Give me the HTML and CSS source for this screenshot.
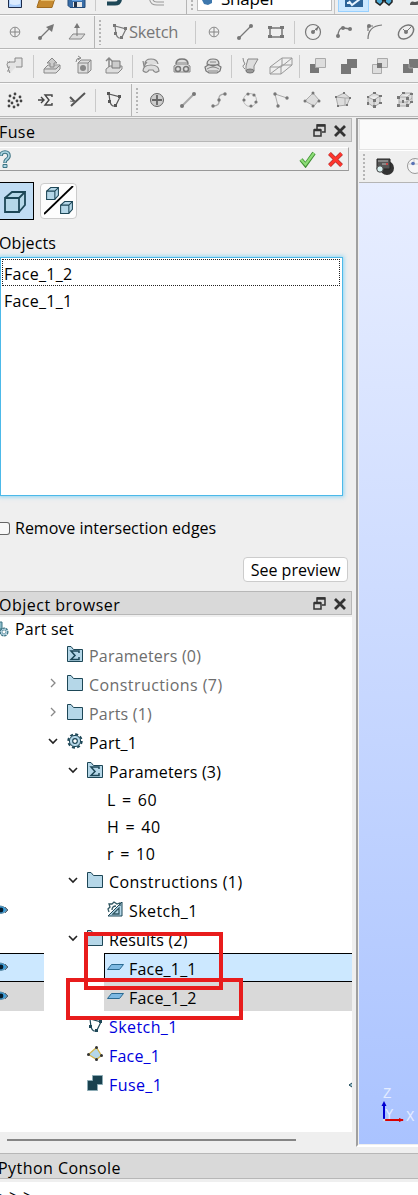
FILE: index.html
```html
<!DOCTYPE html>
<html lang="en">
<head>
<meta charset="utf-8">
<title>Shaper</title>
<link rel="stylesheet" href="styles.css">
</head>
<body>
<svg class="defs" width="0" height="0">
  <defs>
    <symbol id="folder" viewBox="0 0 16 16"><path d="M.5 15.500V.5H4l2.500 3h9v12z" fill="#b5d7e8" stroke="#1d4757"/></symbol>
    <symbol id="sigma" viewBox="0 0 16 16"><path d="M.5 15.500V.5H4l2.500 3h9v12z" fill="#b5d7e8" stroke="#1d4757"/><path d="M12 7V5H4l4 4.500L4 13.500h8V11" fill="none" stroke="#1d4757" stroke-width="1.500"/></symbol>
    <symbol id="cube" viewBox="0 0 22 22"><path d="M1 7 8 1h13v13l-6 7H1z" fill="#b5d7e8"/><path d="M1 7h14v14H1zM1 7l7-6h13l-6 6M21 1v13l-6 7" fill="none" stroke="#1d4757" stroke-width="1.800"/></symbol>
    <symbol id="face" viewBox="0 0 17 8"><path d="M4.500 1.500h12l-4 5H.5z" fill="#7db9e3" stroke="#2b6a92"/></symbol>
    <symbol id="eye" viewBox="0 0 10 12"><path d="M-6 6Q1-2 7 6 1 13-6 6" fill="#3ba0df" stroke="#5b87a0"/><circle cx="1" cy="6" r="2.400" fill="#061b2a"/><path d="M5 3l3 3-3 3" fill="none" stroke="#567"/></symbol>
    <symbol id="float" viewBox="0 0 13 13"><path d="M4 5V1h8v7H9M1 6h7v6H1z" fill="none" stroke="#333" stroke-width="1.500"/><path d="M4 1.500h8M1 6h7" stroke="#333" stroke-width="2.500"/></symbol>
    <symbol id="close" viewBox="0 0 12 12"><path d="m1 1 10 10M11 1 1 11" stroke="#333" stroke-width="2.800"/></symbol>
    <symbol id="right" viewBox="0 0 8 10"><path d="m2 1 4 4-4 4" fill="none" stroke="#888" stroke-width="1.300"/></symbol>
    <symbol id="down" viewBox="0 0 10 8"><path d="m1 2 4 4 4-4" fill="none" stroke="#222" stroke-width="1.600"/></symbol>
    <symbol id="poly" viewBox="-8 -8 16 16"><path d="M-5-6-4 2Q-2 8 2 5L6-3-5-6" fill="none" stroke="currentColor" stroke-width="1.200"/><path d="M-7-8h3v3h-3zM4-5h3v3H4zM-6 0h3v3h-3zM0 4h3v3H0z" fill="currentColor"/></symbol>
  </defs>
</svg>
<div class="window">
  <header class="toolbars">
    <div class="bar bar-top">
      <svg class="tool" viewBox="-15 1 31 14"><path d="M-6.500-8h13V8.500h-13z" fill="#a9cdfb" stroke="#1c2b4a"/><path d="M-5-8h10V5Q0 7-5 5z" fill="#dcecff"/></svg>
      <svg class="tool" viewBox="-15 1 31 14"><path d="M-9 8-6-1h15L6 8.500h-15z" fill="#c68a2f" stroke="#a06b1f"/><path d="M-5 1.500H8" stroke="#e6bd6d"/></svg>
      <svg class="tool" viewBox="-15 1 31 14"><path d="M-9-8H8V8.500H-7l-2-2z" fill="#3a6ea8" stroke="#234a78"/><path d="M-5-8h10V2H-5z" fill="#6ba7e5"/><path d="M-4 3h9v5h-9z" fill="#e8e8e8"/><path d="M-3 3h3v5h-3z" fill="#23334a"/></svg>
      <i class="sep"></i>
      <svg class="tool wide" viewBox="-15 1 43 14"><path d="M-7 4.500h8q5 0 5-5v-5" fill="none" stroke="#1d4757" stroke-width="4"/></svg>
      <svg class="tool redo" viewBox="-15 1 31 14"><path d="M7 4.500H0q-6 0-6-6" fill="none" stroke="#999" stroke-width="4"/><path d="M7 4.500H0q-6 0-6-6" fill="none" stroke="#ededed" stroke-width="2"/></svg>
      <i class="break"></i>
      <div class="combo"><svg width="10" height="6" viewBox="0 0 10 6"><path d="M0 0h10v3L6 5 2 4z" fill="#3d77ad"/></svg><span>Shaper</span></div>
      <i class="edge"></i>
      <div class="pressed"><svg class="tool" viewBox="-15 1 31 14"><path d="M-9-8H9V8H-9z" fill="#2d6498"/><path d="M-5 2-2 6 6 0M-7 4h3" fill="none" stroke="#e7f4ff" stroke-width="2"/></svg></div>
      <svg class="tool" viewBox="-15 1 31 14"><path d="M-8-2h6l1 5-3 3-4-3zM2-2h6v5L5 6 1 3z" fill="#4ba9d5" stroke="#222" stroke-width="1.500"/><path d="M-2 1h4" stroke="#222" stroke-width="3"/></svg>
      <svg class="tool" viewBox="-15 1 31 14"><path d="M-5 6q0-5 5-3l8-2v4l-7 1z" fill="#555"/></svg>
    </div>
    <div class="bar muted">
      <svg class="tool" viewBox="-15 -17 31 33"><g fill="none" stroke="#858585"><circle r="4.800"/><path d="M-4 0h8M0-4v8"/></g></svg>
      <svg class="tool" viewBox="-15 -17 31 33"><path d="M-6 6 4-4" stroke="#777" stroke-width="1.300"/><path d="M8-8 6 0 0-5z" fill="#777"/><circle cx="-6" cy="6" r="2" fill="#777"/></svg>
      <svg class="tool" viewBox="-15 -17 31 33"><path d="M-4 2H8L4 7H-8z" fill="#ddd" stroke="#888"/><path d="M0 4v-9" stroke="#777"/><path d="M0-9 3-4h-6z" fill="#777"/></svg>
      <i class="break narrow"></i>
      <div class="sketch"><svg width="16" height="16"><use href="#poly"/></svg><span>Sketch</span></div>
      <i class="sep"></i>
      <svg class="tool" viewBox="-15 -17 31 33"><g fill="none" stroke="#858585"><circle r="4.800"/><path d="M-4 0h8M0-4v8"/></g></svg>
      <svg class="tool" viewBox="-15 -17 31 33"><path d="M-6 6 6-6" stroke="#777" stroke-width="1.300"/><circle cx="-6" cy="6" r="2"/><circle cx="6" cy="-6" r="2"/></svg>
      <svg class="tool" viewBox="-15 -17 31 33"><path d="M-6-4H6v9H-6z" fill="none" stroke="#777" stroke-width="1.500"/><path d="M-8-6h4v3h-4zM4-6h4v3H4zM-8 3h4v3h-4zM4 3h4v3H4z"/></svg>
      <i class="sep"></i>
      <svg class="tool" viewBox="-15 -17 31 33"><circle r="7.500" fill="none" stroke="#777" stroke-width="1.200"/><path d="m0 0 5-5" stroke="#777"/><circle r="2"/><path d="m2-3 4-3-2 5z"/></svg>
      <svg class="tool" viewBox="-15 -17 31 33"><path d="M-6 5Q-6-5 0-4L6-3" fill="none" stroke="#777" stroke-width="1.300"/><circle cx="-6" cy="4" r="2"/><circle cx="-1" cy="-4" r="2"/><circle cx="6" cy="-3" r="2"/></svg>
      <svg class="tool" viewBox="-15 -17 31 33"><path d="M-7 7Q-7-6 7-7M-7-6h5m-5 0v5" fill="none" stroke="#777" stroke-width="1.200"/><circle cx="-6" cy="-6" r="2"/></svg>
      <svg class="tool" viewBox="-15 -17 31 33"><ellipse rx="8.500" ry="6" fill="none" stroke="#777" stroke-width="1.500" transform="rotate(-38)"/><path d="m-3-3 3 3 5-5" fill="none" stroke="#777"/><circle r="2"/></svg>
    </div>
    <div class="bar muted">
      <svg class="tool" viewBox="-15 -17 31 33"><path d="M-5 7q-3-3-1-5-4-4 0-6h6v-4h7v9H1" fill="#e3e3e3" stroke="#888"/><path d="M-8-4h3m-3 5h3m-3 4h3" stroke="#888" stroke-dasharray="1 1"/></svg>
      <i class="sep"></i>
      <svg class="tool" viewBox="-15 -17 31 33"><path d="M-8 3-4-1H8v4L4 7H-8z" fill="#ddd" stroke="#888"/><path d="M-8 3H4l4-4M-2 1v-4h-3l5-5 5 5H2v4z" fill="#ccc" stroke="#888"/></svg>
      <svg class="tool" viewBox="-15 -17 31 33"><path d="M-5-3-2-6H8V4L5 7H-5z" fill="#ddd" stroke="#888"/><path d="M-5-3H5V7M5-3l3-3M-7-4q0-4 4-4m-2-2 3 2-3 2" fill="none" stroke="#888"/><circle cy="2" r="3" fill="#888"/></svg>
      <svg class="tool" viewBox="-15 -17 31 33"><path d="M-8 3-4 0H8v3L4 7H-8z" fill="#ddd" stroke="#888"/><path d="M-2-5H6v7h-8z" fill="#ccc" stroke="#777"/><path d="M-5 1v-9m-3 3 3-3 3 3" fill="none" stroke="#888" stroke-width="1.500"/></svg>
      <i class="sep"></i>
      <svg class="tool" viewBox="-15 -17 31 33"><path d="M-8 5q0-6 8-6t8 6q-4 3-6-1h-4q-2 4-6 1M-6-2q0-5 6-5t7 5M-4-4-7 0l-1-5" fill="#ddd" stroke="#888" stroke-width="1.200"/></svg>
      <svg class="tool" viewBox="-15 -17 31 33"><path d="M-8 6V0l3-2H5l3 2v6z" fill="#ddd" stroke="#888"/><path d="M-6-2q0-5 6-5t6 5" fill="#ddd" stroke="#777" stroke-width="1.500"/><path d="M-5-3H5" stroke="#888"/><circle cx="-4" cy="3" r="2.500" fill="none" stroke="#777" stroke-width="1.500"/><circle cx="4" cy="3" r="2.500" fill="none" stroke="#777" stroke-width="1.500"/></svg>
      <svg class="tool" viewBox="-15 -17 31 33"><path d="M-7 5-8 1l3-2H5l3 2-1 4-3 2h-8zM-6-2q0-5 6-5t6 5l-6 2z" fill="#ddd" stroke="#777" stroke-width="1.200"/><path d="M-6 3q6-4 12 0M-3-4h6M-5 5H5" fill="none" stroke="#888"/></svg>
      <i class="sep"></i>
      <svg class="tool" viewBox="-15 -17 31 33"><path d="M-2-7H8L4 0v5q-4 3-8 0V0z" fill="#ddd" stroke="#888"/><ellipse cy="5" rx="4" ry="2" fill="#999" stroke="#777"/><path d="M-5 3q-4-3 0-5-2-3-2-6" fill="none" stroke="#888"/></svg>
      <svg class="tool" viewBox="-15 -17 31 33"><path d="M-11 1 1-8h10v7L0 8h-11zM-11 1H0l11-9M0 1v7M1-8v7l-12 9M1-1h10" fill="none" stroke="#999"/></svg>
      <i class="sep"></i>
      <svg class="tool" viewBox="-15 -17 31 33"><path d="M-8-2h9v9h-9z"/><path d="M-2.500-7.500h10v9h-10z" fill="#ddd" stroke="#aaa"/></svg>
      <svg class="tool" viewBox="-15 -17 31 33"><path d="M-8-2h6v-5H8V2H2v6H-8z"/></svg>
      <svg class="tool" viewBox="-15 -17 31 33"><path d="M-7.500-1.500h9v9h-9zM-2.500-7.500h10v9h-10z" fill="#ddd" stroke="#aaa"/><path d="M-3-3h5v5h-5z"/></svg>
      <svg class="tool" viewBox="-15 -17 31 33"><path d="M-8-2h6v-5H8V2H2v5H-8z"/><path d="M-2-2v4h4" fill="none" stroke="#aaa"/></svg>
    </div>
    <div class="bar">
      <svg class="tool" viewBox="-15 -17 31 33"><g fill="#444"><circle cx="0" cy="-6" r="1.400"/><circle cx="-5" cy="-4" r="1.400"/><circle cx="5" cy="-3" r="1.400"/><circle cx="-1" cy="-2" r="1.400"/><circle cx="-6" cy="1" r="1.400"/><circle cx="2" cy="1" r="1.400"/><circle cx="6" cy="1" r="1.400"/><circle cx="-3" cy="3" r="1.400"/><circle cx="3" cy="5" r="1.400"/><circle cx="-1" cy="7" r="1.400"/><circle cx="-6" cy="6" r="1.400"/></g></svg>
      <svg class="tool" viewBox="-15 -17 31 33"><path d="M-8 0h5M-5-3l3 3-3 3M6-3v-2H-1l4 5-4 5h7V3" fill="none" stroke="#444" stroke-width="1.400"/></svg>
      <svg class="tool" viewBox="-15 -17 31 33"><path d="M-6 6 8-7M-7-3l5 5" fill="none" stroke="#555" stroke-width="2"/><path d="M-2 2-7 1" fill="none" stroke="#777" stroke-width="1.200"/></svg>
      <i class="sep"></i>
      <svg class="tool dark" viewBox="-15 -17 31 33"><use href="#poly" x="-8" y="-8" width="16" height="16"/></svg>
      <i class="break"></i>
      <svg class="tool" viewBox="-15 -17 31 33"><circle r="6.500" fill="#ccc" stroke="#666"/><path d="M-5 0H5M0-5V5" stroke="#666" stroke-width="1.800"/></svg>
      <svg class="tool" viewBox="-15 -17 31 33"><path d="M-6 6 6-6" stroke="#aaa" stroke-width="2"/><circle cx="-6" cy="6" r="2"/><circle cx="6" cy="-6" r="2"/></svg>
      <svg class="tool" viewBox="-15 -17 31 33"><path d="M-6 6Q1 6 0 0T6-6" fill="none" stroke="#aaa" stroke-width="1.300"/><circle cx="-6" cy="6" r="1.700"/><circle r="1.700"/><circle cx="6" cy="-6" r="1.700"/></svg>
      <svg class="tool" viewBox="-15 -17 31 33"><circle r="6.500" fill="none" stroke="#bbb"/><circle cx="-6" r="1.600"/><circle cx="-2" cy="-6" r="1.600"/><circle cx="4" cy="-5" r="1.600"/><circle cx="6" cy="2" r="1.600"/><circle cx="1" cy="6" r="1.600"/></svg>
      <svg class="tool" viewBox="-15 -17 31 33"><path d="M6-2-6-6-3 6" fill="none" stroke="#aaa"/><circle cx="6" cy="-2" r="1.700"/><circle cx="-6" cy="-6" r="1.700"/><circle cx="-3" cy="6" r="1.700"/></svg>
      <svg class="tool" viewBox="-15 -17 31 33"><path d="M-7 1 1-7 7 0 2 6z" fill="#ddd" stroke="#aaa"/><circle cx="-7" cy="1" r="1.500"/><circle cx="1" cy="-7" r="1.500"/><circle cx="7" cy="1" r="1.500"/><circle cx="1" cy="6" r="1.500"/></svg>
      <svg class="tool" viewBox="-15 -17 31 33"><path d="M-7-3 1-7 7-2 4 5-5 6zM-7-3l9 1 5 0M2-2v8" fill="#ddd" stroke="#aaa"/><path d="M-8-4h2v2h-2zM0-8h2v2H0zM6-3h2v2H6zM3 4h2v2H3zM-6 5h2v2h-2z"/></svg>
      <svg class="tool" viewBox="-15 -17 31 33"><path d="M-6-3 0-7l6 3v7L0 7-6 3zM-6-3l6 3 6-4M0 0v7" fill="#ddd" stroke="#aaa"/><path d="M-7-4h2v2h-2zM-1-8h3v2h-3zM5-5h3v2H5zM-1-1h3v3h-3zM-7 2h2v3h-2zM5 2h3v2H5zM-1 5h3v3h-3z"/></svg>
      <svg class="tool" viewBox="-15 -17 31 33"><path d="M-6-3-2-7h9v9L2 6h-8zM-6-3h8l5-4M2-3v9M-6 2h8l5-4" fill="#ddd" stroke="#aaa"/><path d="M-8-4h3v3h-3zM-3-8h3v2h-3zM5-7h3v2H5zM1-3h3v3H1zM-8 4h3v3h-3zM1 4h3v3H1zM5 1h3v2H5zM-3 0h2v3h-2z"/></svg>
    </div>
  </header>

  <main class="work">
    <div class="left">
      <section class="fuse">
        <div class="title"><span class="t-fuse">Fuse</span><svg width="13" height="13"><use href="#float"/></svg><svg width="12" height="12"><use href="#close"/></svg></div>
        <div class="actions">
          <svg class="help" width="13" height="18" viewBox="0 0 13 18"><path d="M1 6q0-4 4-4t4 4q0 2-3 4-1 1-1 3" fill="none" stroke="#3d7484" stroke-width="3.600"/><path d="M1 5.500Q1 2 5 2t4 4q0 2-3 4-1 1-1 2.500" fill="none" stroke="#aed6e3" stroke-width="1.600"/><path d="M3 14.500h4v3H3z" fill="#aed6e3" stroke="#3d7484"/></svg>
          <svg width="17" height="17" viewBox="0 0 17 17"><path d="M2 8.500 6.500 14 15 2" fill="none" stroke="#418e35" stroke-width="4"/><path d="M2 8.500 6.500 13.500 15 2" fill="none" stroke="#8cdd76" stroke-width="2.200"/></svg>
          <svg class="cancel" width="15" height="15" viewBox="0 0 15 15"><path d="m1.500 1.500 12 12M13.500 1.500l-12 12" stroke="#a33" stroke-width="4"/><path d="m1.500 1.500 12 12M13.500 1.500l-12 12" stroke="#ff352d" stroke-width="2.800"/></svg>
        </div>
        <div class="modes">
          <div class="mode on"><svg width="22" height="22"><use href="#cube"/></svg></div>
          <div class="mode"><svg width="30" height="30"><use href="#cube" x="2" y="1" width="13" height="13"/><use href="#cube" x="16" y="15" width="13" height="13"/><path d="M0 28 29 0" stroke="#000" stroke-width="1.800"/></svg></div>
        </div>
        <div class="label">Objects</div>
        <div class="list"><div class="item focus">Face_1_2</div><div class="item">Face_1_1</div></div>
        <div class="check"><i></i><span>Remove intersection edges</span></div>
        <div class="preview-row"><div class="preview">See preview</div></div>
      </section>
      <section class="browser">
        <div class="title"><span class="t-browser">Object browser</span><svg width="13" height="13"><use href="#float"/></svg><svg width="12" height="12"><use href="#close"/></svg></div>
        <div class="tree">
          <div class="root"><svg width="10" height="16" viewBox="2 0 10 16"><path d="M-3 1h7v7h-7z" fill="#8dbdcb" stroke="#3d7484"/><circle cx="6" cy="11" r="3" fill="none" stroke="#3d7484" stroke-width="3" stroke-dasharray="2 .5"/><circle cx="6" cy="11" r="2.800" fill="none" stroke="#b5d7e8"/></svg><span>Part set</span></div>
          <div class="row l1 gray"><i class="arrow"></i><svg class="ico"><use href="#sigma"/></svg><span>Parameters (0)</span></div>
          <div class="row l1 gray"><svg class="arrow"><use href="#right"/></svg><svg class="ico"><use href="#folder"/></svg><span class="loose">Constructions (7)</span></div>
          <div class="row l1 gray"><svg class="arrow"><use href="#right"/></svg><svg class="ico"><use href="#folder"/></svg><span>Parts (1)</span></div>
          <div class="row l1"><svg class="arrow"><use href="#down"/></svg><svg class="ico" viewBox="-8 -8 16 16"><circle r="6.700" fill="none" stroke="#1d4757" stroke-width="2" stroke-dasharray="3 2.260"/><circle r="5.600" fill="#b5d7e8" stroke="#1d4757"/><circle r="2.300" fill="#fff" stroke="#1d4757" stroke-width="1.200"/></svg><span>Part_1</span></div>
          <div class="row l2"><svg class="arrow"><use href="#down"/></svg><svg class="ico"><use href="#sigma"/></svg><span>Parameters (3)</span></div>
          <div class="row value">L = 60</div>
          <div class="row value">H = 40</div>
          <div class="row value">r = 10</div>
          <div class="row l2"><svg class="arrow"><use href="#down"/></svg><svg class="ico"><use href="#folder"/></svg><span class="loose">Constructions (1)</span></div>
          <div class="row l3"><svg class="eye"><use href="#eye"/></svg><svg class="ico" viewBox="0 0 16 16"><path d="M1 15 15 1v14z" fill="#b5d7e8" stroke="#1d4757"/><path d="m2 11-1-3 2-2-1-3 3 0 2-2 3 2 3-1v3M5 9q0-4 4-4M6 13l6-6v6z" fill="none" stroke="#315762" stroke-width="1.300"/></svg><span class="loose">Sketch_1</span></div>
          <div class="row l2"><svg class="arrow"><use href="#down"/></svg><svg class="ico"><use href="#folder"/></svg><span>Results (2)</span></div>
          <div class="row l3 selected"><div class="eye-cell"><svg class="eye"><use href="#eye"/></svg></div><div class="entry"><svg class="flat"><use href="#face"/></svg><span>Face_1_1</span></div></div>
          <div class="row l3 related"><div class="eye-cell"><svg class="eye"><use href="#eye"/></svg></div><div class="entry"><svg class="flat"><use href="#face"/></svg><span>Face_1_2</span></div></div>
          <div class="row l2 blue"><i class="arrow"></i><svg class="ico teal"><use href="#poly"/></svg><span class="loose">Sketch_1</span></div>
          <div class="row l2 blue"><i class="arrow"></i><svg class="ico" viewBox="0 0 16 16"><path d="m1.500 8.500 8-7 5 8-5 4z" fill="#b5d7e8" stroke="#d2b449" stroke-width="1.300"/><g fill="#333"><circle cx="1.500" cy="8.500" r="1.500"/><circle cx="9.500" cy="1.500" r="1.500"/><circle cx="14.500" cy="9.500" r="1.500"/><circle cx="9.500" cy="13.500" r="1.500"/></g></svg><span>Face_1</span></div>
          <div class="row l2 blue"><i class="arrow"></i><svg class="ico" viewBox="0 0 16 16"><path d="M.5 5.500h5v-5h10v9h-5v6H.5z" fill="#19414f" stroke="#8cabb5"/></svg><span class="loose">Fuse_1</span><svg class="clip" viewBox="0 0 4 8"><path d="M4 2 1 4l3 2" fill="#9cc5d4" stroke="#1d4757"/></svg></div>
          <div class="mark mark-a"></div><div class="mark mark-b"></div>
        </div>
        <div class="scroll"><i></i></div>
      </section>
    </div>
    <section class="view">
      <div class="tab"></div>
      <div class="viewbar"><i class="grip"></i>
        <svg width="20" height="20" viewBox="0 0 20 20"><ellipse cx="12" cy="11" rx="7" ry="7" fill="#333"/><path d="M2 2h13v10H2z" fill="#555" stroke="#222"/><path d="M3 4h10M7 7h4" stroke="#bbb"/><path d="M11 7h2" stroke="#e44" stroke-width="1.500"/><circle cx="5" cy="12" r="3.200" fill="#d7eeee" stroke="#444"/></svg>
        <svg width="14" height="20" viewBox="0 0 14 20"><ellipse cx="9" cy="9" rx="7.500" ry="7.500" fill="#f6f6f6" stroke="#999"/><path d="M3 7h9M8 2v6" stroke="#ccc"/><circle cx="7" cy="6.500" r="1.800" fill="#5873b5"/></svg>
      </div>
      <div class="canvas">
        <svg class="axes" width="40" height="45" viewBox="0 0 40 45"><g font-family="Liberation Mono, monospace" font-size="14" fill="#e4ecff"><text x="2" y="20">Z</text><text x="4" y="41">Y</text><text x="25" y="43">X</text></g><path d="M4 42h18" stroke="#d90000" stroke-width="2"/><path d="m18 40 5 2-5 2z" fill="#d90000"/><path d="M3 42V25" stroke="#0000d2" stroke-width="2"/><path d="m.5 28 2.500-5 2.500 5z" fill="#0000d2"/><circle cx="3" cy="42" r="1.300" fill="#ddd"/></svg>
      </div>
    </section>
  </main>
  <section class="console">
    <div class="title"><span class="t-python">Python Console</span></div>
    <div class="prompt">&gt;&gt;&gt;</div>
  </section>
</div>
</body>
</html>
```
FILE: styles.css
```css
* { box-sizing: border-box; }
body { margin: 0; background: #efefef; color: #000; font: 16px/20px "Open Sans", "Noto Sans", sans-serif; }
.defs { position: absolute; }
svg { display: block; flex: none; }
span { white-space: nowrap; }
.window { width: 418px; height: 1195px; overflow: hidden; display: flex; flex-direction: column; }

.toolbars { height: 118px; flex: none; }
.bar { height: 34px; display: flex; align-items: stretch; overflow: hidden; border-top: 1px solid #fafafa; border-bottom: 1px solid #b7b7b7; fill: #777; }
.bar-top { height: 15px; border-top: 0; }
.tool { width: 31px; height: 33px; margin-top: -1px; }
.bar-top .tool { height: 14px; margin-top: 0; }
.bar-top .wide { width: 43px; }
.dark { color: #555; }
.sep { width: 6px; flex: none; padding: 5px 0 4px 2px; }
.bar-top .sep { padding: 0 0 3px 2px; }
.sep::before { content: ""; display: block; width: 1px; height: 100%; background: #c9c9c9; }
.break { width: 12px; flex: none; border-left: 1px solid #b5b5b5; margin-left: 1px; padding: 4px 0 3px 4px; }
.break + * { margin-left: -1px; }
.break.narrow { width: 11px; }
.break::before, .grip { content: ""; display: block; width: 2px; height: 100%; background: repeating-linear-gradient(#b5b5b5 0 2px, transparent 2px 4px); }
.bar-top .break { margin-left: 13px; width: 12px; padding-top: 0; }
.combo { width: 135px; height: 11px; flex: none; display: flex; align-items: flex-start; overflow: hidden; background: #fff; border: 1px solid #bdbdbd; border-top: 0; padding-left: 4px; }
.combo span { margin: -10px 0 0 9px; font-size: 17px; line-height: 18px; letter-spacing: -.2px; }
.edge { width: 4px; flex: none; border-left: 1px solid #c5c5c5; margin-left: 2px; }
.pressed { width: 31px; height: 12px; flex: none; background: #cce8ff; border: 1px solid #99d1ff; border-top: 0; overflow: hidden; }
.sketch { width: 89px; flex: none; display: flex; align-items: center; color: #777; padding-left: 8px; }
.sketch span { margin-left: 1px; font-size: 16.500px; letter-spacing: -.3px; }

.work { height: 1035px; flex: none; display: flex; }
.left { width: 356px; flex: none; }
.title { width: 352px; height: 24px; display: flex; align-items: center; background: #d9d9d9; border: 1px solid #b7b7b7; border-left: 0; padding: 3px 5px 0 0; }
.title span { margin-right: auto; margin-left: -1px; letter-spacing: .4px; }
.title .t-browser { letter-spacing: .5px; }
.title .t-python { letter-spacing: .46px; margin-left: -2px; }
.title svg { margin: -2px 0 0 8px; }
.fuse { height: 473px; }
.actions { height: 24px; width: 349px; margin-top: 5px; display: flex; align-items: center; justify-content: flex-end; border-top: 1px solid #fff; border-right: 1px solid #aaa; border-bottom: 1px solid #999; padding-right: 5px; }
.help { margin-right: auto; }
.cancel { margin-left: 12px; }
.modes { display: flex; align-items: center; gap: 6px; height: 38px; margin-top: 11px; }
.mode { width: 37px; height: 36px; display: flex; align-items: center; justify-content: center; background: #fdfdfd; border: 1px solid #ccc; border-radius: 4px; }
.mode.on { width: 34px; height: 38px; padding: 2px 3px 0 0; background: #c0dcf3; border: 1px solid #000; border-left: 0; border-radius: 0; }
.label { height: 37px; padding-top: 13px; margin-left: -1px; letter-spacing: .1px; }
.list { height: 239px; width: 343px; background: #fff; border: 1px solid #4cb9e9; box-shadow: 0 0 4px 1px #55c4f5a0; padding: 1px 2px 1px 1px; letter-spacing: .3px; }
.item { height: 27px; line-height: 30px; padding-left: 2px; }
.item.focus { outline: 1px dotted #222; outline-offset: -1px; }
.check { display: flex; align-items: center; gap: 5px; margin-top: 22px; height: 20px; }
.check i { width: 10px; height: 13px; flex: none; border: 1px solid #666; border-left: 0; border-radius: 0 3px 3px 0; background: #f8f8f8; }
.preview-row { display: flex; justify-content: flex-end; margin: 19px 8px 0 0; }
.preview { width: 105px; height: 25px; background: #fff; border: 1px solid #ccc; border-radius: 4px; text-align: center; line-height: 25px; }

.tree { position: relative; width: 352px; height: 515px; margin-top: 2px; background: #fff; overflow: hidden; letter-spacing: .2px; }
.loose { letter-spacing: .42px; }
.root { height: 23px; display: flex; align-items: center; gap: 5px; }
.row { height: 29px; display: flex; align-items: center; padding-top: 2px; }
.row .ico { width: 16px; height: 16px; margin: -3px 6px 0 0; }
.row .arrow { width: 10px; height: 10px; margin: -3px 9px 0 0; flex: none; }
.l1 { padding-left: 48px; }
.l2 { padding-left: 68px; }
.value { height: 27px; padding-left: 107px; letter-spacing: .5px; word-spacing: 1.500px; }
.gray { color: #6d6d6d; }
.blue { color: #00d; }
.eye { width: 10px; height: 12px; margin-top: -2px; }
.l3 > .eye { margin-right: 97px; }
.eye-cell { width: 44px; height: 29px; display: flex; align-items: center; margin-right: 60px; }
.selected, .related { padding-top: 0; }
.entry { flex: 1; height: 29px; display: flex; align-items: center; padding: 2px 0 0 2px; }
.flat { width: 17px; height: 8px; margin: -3px 5px 0 0; }
.selected .eye-cell, .selected .entry { background: #cce8ff; border-top: 1px solid #000; border-bottom: 1px solid #000; }
.selected .entry { border-left: 1px solid #000; padding-left: 2px; }
.related .entry { padding-left: 3px; }
.related .eye-cell, .related .entry { background: #d9d9d9; }
.teal { color: #1d4757; }
.clip { width: 4px; height: 8px; margin-left: auto; }
.mark { position: absolute; border: 4px solid #e81c1c; }
.mark-a { left: 84px; top: 315px; width: 139px; height: 58px; }
.mark-b { left: 66px; top: 361px; width: 177px; height: 42px; }
.scroll { height: 21px; padding: 7px 0 0 7px; }
.scroll i { display: block; width: 289px; height: 2px; background: #858585; }

.view { flex: 1; height: 1029px; border-left: 2px solid #a0a0a0; border-top: 1px solid #999; border-bottom: 2px solid #fff; padding-left: 1px; }
.tab { height: 31px; background: #fafafa; border: 1px solid #e3e3e3; border-right: 0; }
.viewbar { height: 33px; display: flex; align-items: center; border-top: 1px solid #fff; border-bottom: 1px solid #b5b5b5; padding-left: 4px; overflow: hidden; }
.grip { height: 26px; margin-right: 10px; flex: none; }
.viewbar svg + svg { margin-left: 11px; }
.canvas { height: 961px; background: linear-gradient(#e8eeff, #aac3ff); display: flex; align-items: flex-end; padding: 0 0 21px 22px; }
.axes { overflow: visible; }
.console { flex: 1; background: #efefef; }
.console .title { width: 418px; height: 26px; border-right: 0; }
.prompt { margin: 3px 0 0; height: 20px; background: #fff; line-height: 28px; letter-spacing: 4.800px; text-indent: -5px; }
```
